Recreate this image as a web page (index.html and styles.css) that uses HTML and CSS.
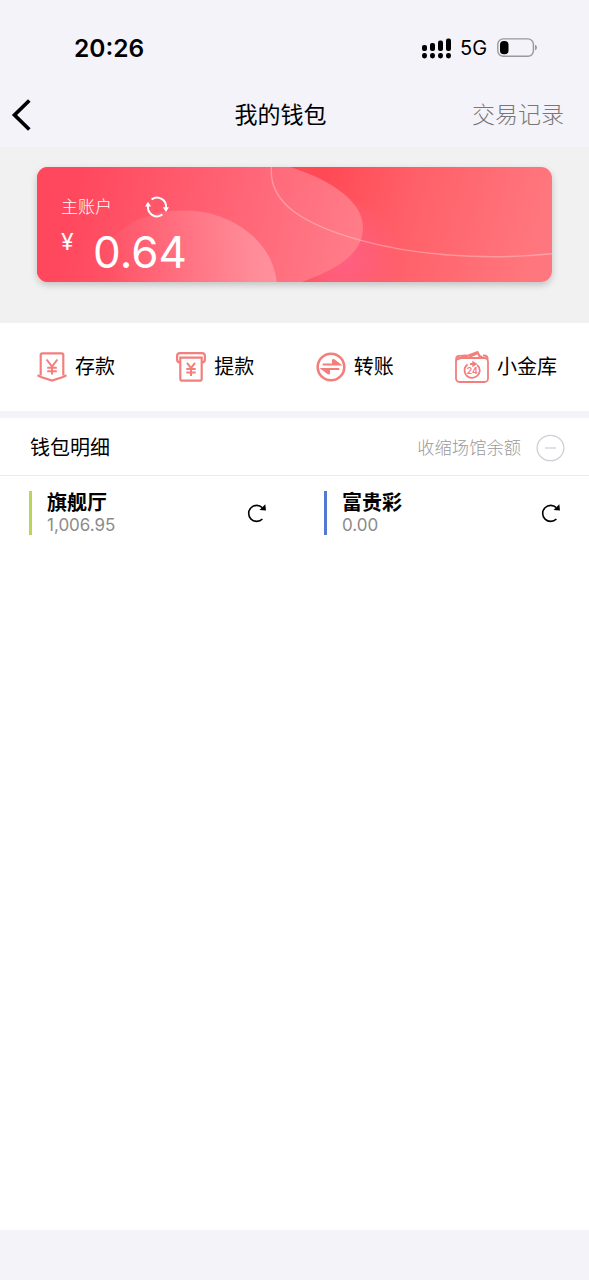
FILE: index.html
```html
<!DOCTYPE html>
<html lang="zh-CN">
<head>
<meta charset="utf-8">
<meta name="viewport" content="width=device-width, initial-scale=1">
<title>我的钱包</title>
<link rel="stylesheet" href="styles.css">
</head>
<body>
<div class="app">
  <div class="status">
    <span class="clock">20:26</span>
    <div class="indicators">
      <svg class="signal" width="30" height="22" viewBox="0 0 30 22">
        <rect x="0" y="8" width="5" height="6" rx="2"/><rect x="8" y="6" width="5" height="8" rx="2"/><rect x="16" y="3.5" width="5" height="10.5" rx="2"/><rect x="24" y="1.5" width="5" height="12.5" rx="2"/>
        <rect x="0" y="16" width="5" height="5.5" rx="2.4"/><rect x="8" y="16" width="5" height="5.5" rx="2.4"/><rect x="16" y="16" width="5" height="5.5" rx="2.4"/><rect x="24" y="16" width="5" height="5.5" rx="2.4"/>
      </svg>
      <span class="network">5G</span>
      <svg class="battery" width="40" height="20" viewBox="0 0 40 20">
        <rect x=".8" y=".9" width="35.6" height="17.4" rx="5.5" fill="none" stroke="#99999c" stroke-width="1.4"/>
        <rect x="3" y="3" width="8.5" height="13.2" rx="3.8"/>
        <path d="M38 6.800q2 .8 2 2.800t-2 2.800z" fill="#99999c"/>
      </svg>
    </div>
  </div>
  <header class="navbar">
    <svg class="back" width="24" height="36" viewBox="0 0 24 36"><path d="M18.300 3.500 3.500 18l14.800 14.500" fill="none" stroke="#000" stroke-width="3.700"/></svg>
    <h1 class="title">我的钱包</h1>
    <a class="records">交易记录</a>
  </header>
  <section class="hero">
    <div class="card">
      <svg class="card-art" viewBox="0 0 515 114" preserveAspectRatio="none">
        <defs>
          <linearGradient id="base" gradientUnits="userSpaceOnUse" x1="285" y1="20" x2="500" y2="80"><stop stop-color="#ff4a55"/><stop offset=".4" stop-color="#ff6069"/><stop offset="1" stop-color="#ff777e"/></linearGradient>
          <linearGradient id="lobe" gradientUnits="userSpaceOnUse" x1="30" y1="40" x2="320" y2="110"><stop stop-color="#ff475d"/><stop offset=".68" stop-color="#ff6c7c"/><stop offset="1" stop-color="#ff7e89"/></linearGradient>
          <linearGradient id="hill" gradientUnits="userSpaceOnUse" x1="70" y1="110" x2="215" y2="75"><stop stop-color="#fff" stop-opacity="0"/><stop offset="1" stop-color="#fff" stop-opacity=".23"/></linearGradient>
          <radialGradient id="glow" gradientUnits="userSpaceOnUse" cx="305" cy="90" r="62"><stop stop-color="#ff6083"/><stop offset=".4" stop-color="#ff6080" stop-opacity=".8"/><stop offset="1" stop-color="#ff6078" stop-opacity="0"/></radialGradient>
        </defs>
        <path d="M0 0h515v114H0z" fill="url(#base)"/>
        <path d="M240 0h140v114H240z" fill="url(#glow)"/>
        <path d="M0 0H253C298 14 326 36 326 60S304 100 265 114H0z" fill="url(#lobe)"/>
        <ellipse cx="146" cy="120" rx="94" ry="77" fill="url(#hill)"/>
        <path d="M234.500 0C231 36 268 57 321 72S445 93 515 86" fill="none" stroke="#fff" stroke-opacity=".3" stroke-width="1.400"/>
      </svg>
      <div class="card-body">
        <div class="account">
          <span>主账户</span>
          <svg class="sync" width="24" height="22" viewBox="0 0 24 22">
            <g fill="none" stroke="#fff" stroke-width="2"><path d="M6.600 3.500A9 9 0 0 1 20.900 12"/><path d="M17.400 18.500A9 9 0 0 1 3.100 10"/></g>
            <path d="M17.800 11.200h6.200L21 16zM0 10.600h6.200L3 5.800z" fill="#fff"/>
          </svg>
        </div>
        <div class="balance"><span class="yen">¥</span><span class="amount">0.64</span></div>
      </div>
    </div>
  </section>
  <nav class="actions">
    <a class="action">
      <svg width="30" height="30" viewBox="0 0 30 30" fill="none" stroke="#f37f7d" stroke-width="2.200"><path d="M3.700 23.500V3q0-1.600 1.600-1.600h19.400q1.600 0 1.600 1.600v20.500"/><path d="M.5 23.300 4 25l11 3.600L26 25l3.500-1.700"/><path d="M9.600 7.500 15 14.500l5.400-7M15 14.500v8M10.200 15.700h9.600M10.200 19.300h9.600" stroke-width="2"/></svg>
      <span>存款</span>
    </a>
    <a class="action">
      <svg width="30" height="30" viewBox="0 0 30 30" fill="none" stroke="#f37f7d" stroke-width="2.200"><path d="M4 10.300q-2.900 0-2.900-2.800V4q0-2.900 2.900-2.900h22q2.900 0 2.900 2.900v3.500q0 2.800-2.900 2.800"/><path d="M4.300 5.700h21.400v21q0 2-2 2H6.300q-2 0-2-2z"/><path d="m11 10.900 4 5.300 4-5.300M15 16v8M10.300 17h9.400M10.300 20.500h9.400" stroke-width="2"/></svg>
      <span>提款</span>
    </a>
    <a class="action">
      <svg width="30" height="30" viewBox="0 0 30 30" fill="none" stroke="#f37f7d"><circle cx="15" cy="15" r="13.300" stroke-width="2.600"/><path d="M6.700 12.500h16.600L17 7.700M23.300 17H6.700l6.300 4.800" stroke-width="2.200"/><path d="m16 7 7.300 5.600H16zM14 22.500 6.700 17H14z" fill="#f37f7d" stroke="none"/></svg>
      <span>转账</span>
    </a>
    <a class="action">
      <svg width="34" height="34" viewBox="0 0 34 34" fill="none" stroke="#f37f7d" stroke-width="1.800"><rect x="1" y="8" width="32" height="24" rx="3.500"/><path d="M1.200 11V8.500q0-2.500 3-2.700L12 5.300M28 5.500h1q3.800 0 3.800 4M2 9.500l5-1.700 15.500-6 3 5.700M13 7.800l10-4.500 2 4.500M25.500 5.800l3 2.700"/><path d="M12.600 14.500a7.400 7.400 0 0 0 3.800 13.300 7.700 7.700 0 0 0 8.400-7.300 7.500 7.500 0 0 0-2.700-5.500M15 14h5" stroke-width="1.800"/><path d="m17.300 10.800 5.200 3.200-5.200 3.200z" fill="#f37f7d" stroke="none"/><text class="badge24" x="17.200" y="23.700" text-anchor="middle">24</text></svg>
      <span>小金库</span>
    </a>
  </nav>
  <main class="details">
    <div class="details-head">
      <h2 class="details-title">钱包明细</h2>
      <span class="collapse">收缩场馆余额</span>
      <svg width="29" height="28" viewBox="0 0 29 28" fill="none" stroke="#cfcfda" stroke-width="1.300"><ellipse cx="14.500" cy="14" rx="13.400" ry="12.700"/><path d="M9 14h11"/></svg>
    </div>
    <div class="venues">
      <div class="venue venue-green">
        <div class="venue-info"><strong>旗舰厅</strong><span>1,006.95</span></div>
        <svg class="reload" width="20" height="20" viewBox="0 0 20 20"><path d="M15.400 4.800A8 8 0 1 0 15.400 16" fill="none" stroke="#000" stroke-width="1.600"/><path d="M18.300 1.300 19 7.500l-6.500-.4z"/></svg>
      </div>
      <div class="venue venue-blue">
        <div class="venue-info"><strong>富贵彩</strong><span>0.00</span></div>
        <svg class="reload" width="20" height="20" viewBox="0 0 20 20"><path d="M15.400 4.800A8 8 0 1 0 15.400 16" fill="none" stroke="#000" stroke-width="1.600"/><path d="M18.300 1.300 19 7.500l-6.500-.4z"/></svg>
      </div>
    </div>
  </main>
</div>
</body>
</html>
```
FILE: styles.css
```css
* { box-sizing: border-box; }
body { margin: 0; background: #f4f3f9; color: #000; font-family: Inter, "Noto Sans CJK SC", sans-serif; }
svg { display: block; flex: none; }
h1, h2 { margin: 0; font-weight: 400; }
.app { height: 1280px; padding-bottom: 50px; display: flex; flex-direction: column; }

.status { height: 83px; padding: 12px 52px 0 74px; display: flex; align-items: center; justify-content: space-between; }
.clock { font-size: 24.5px; font-weight: 600; line-height: 30px; }
.indicators { display: flex; align-items: center; }
.network { margin-left: 8px; width: 37px; font-size: 20px; line-height: 24px; }

.navbar { height: 64px; padding: 0 25px 0 11px; display: grid; grid-template-columns: 1fr auto 1fr; align-items: center; font-size: 23px; line-height: 34px; }
.title { font-size: 23px; margin-left: 14px; transform: translateX(-7px); }
.records { justify-self: end; color: #777; font-weight: 300; }
.title { margin-left: 0; }

.hero { height: 176px; padding: 20px 37px 0; background: #f1f1f1; }
.card { display: grid; height: 115px; border-radius: 11px; overflow: hidden; box-shadow: 0 3px 7px rgba(0, 0, 0, .2); }
.card-art { grid-area: 1 / 1; width: 100%; height: 115px; }
.card-body { grid-area: 1 / 1; z-index: 1; padding: 28px 24px 0; color: #fff; }
.account { display: flex; align-items: center; height: 24px; gap: 33px; font-size: 17px; font-weight: 300; line-height: 24px; }
.balance { display: flex; align-items: flex-start; }
.yen { width: 32px; padding-top: 8px; font-size: 23px; line-height: 30px; }
.amount { font-size: 44px; line-height: 52px; padding-top: 7px; }

.actions { height: 88px; padding: 0 32px 0 37px; display: flex; align-items: center; justify-content: space-between; background: #fff; }
.action { display: flex; align-items: center; gap: 8px; font-size: 20px; line-height: 30px; }
.badge24 { font: 700 8.500px Inter, sans-serif; fill: #f37f7d; stroke: none; }

.details { flex: 1; margin-top: 7px; background: #fff; }
.details-head { height: 58px; padding: 2px 24px 0 30px; display: flex; align-items: center; border-bottom: 1px solid #ebebee; }
.details-title { flex: 1; font-size: 20px; line-height: 30px; }
.collapse { margin-right: 15px; color: #999; font-size: 17.300px; font-weight: 300; line-height: 26px; }
.venues { display: grid; grid-template-columns: 295px 294px; padding-top: 15px; }
.venue { display: flex; align-items: center; justify-content: space-between; height: 44px; margin-left: 29px; padding: 0 28px 0 15px; border-left: 3px solid #b9d65b; }
.venue-blue { border-color: #5379d3; }
.venue-info { display: flex; flex-direction: column; }
.venue-info strong { font-size: 20px; line-height: 23px; font-weight: 700; }
.venue-info span { color: #8b8b8b; font-size: 17px; line-height: 20px; }
```
